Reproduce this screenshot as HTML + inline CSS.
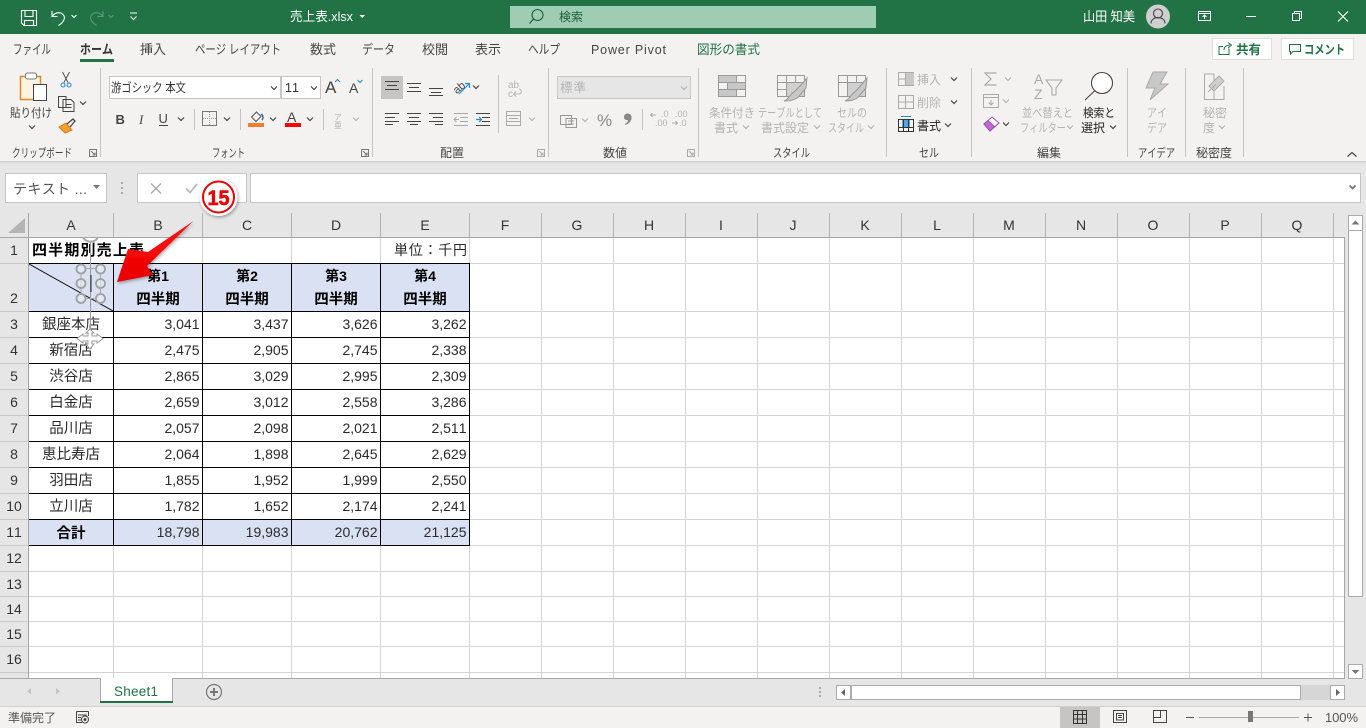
<!DOCTYPE html>
<html lang="ja"><head><meta charset="utf-8"><title>売上表.xlsx - Excel</title>
<style>
html,body{margin:0;padding:0;width:1366px;height:728px;overflow:hidden;background:#fff}
svg{display:block}
text{font-family:"Liberation Sans","Noto Sans CJK JP",sans-serif;font-size:12px;fill:#444;font-kerning:none}
.w{fill:#fff}
.tab{font-size:13px;fill:#444}
.dim{fill:#b4b4b4}
.lab{font-size:12px;fill:#444}
.c{font-size:14px;fill:#2a2a2a}
.j{font-size:14.500px;fill:#2a2a2a;text-anchor:middle}
.b{font-weight:bold;fill:#000}
.h{font-size:14px;fill:#333;text-anchor:middle}
.ln{fill:none;stroke:#444;stroke-width:1}
.dl{fill:none;stroke:#aaa;stroke-width:1}
.ch{fill:none;stroke:#444;stroke-width:1.2}
.chd{fill:none;stroke:#b4b4b4;stroke-width:1.2}
</style></head><body>
<svg width="1366" height="728" viewBox="0 0 1366 728" xmlns="http://www.w3.org/2000/svg">
<defs>
<path id="cv" d="M-3-1.5 0 1.5 3-1.5"/>
<filter id="sh" x="-30%" y="-30%" width="160%" height="160%"><feDropShadow dx="1" dy="1.5" stdDeviation="1.5" flood-color="#000" flood-opacity=".35"/></filter>
<linearGradient id="rg" x1="0" y1="0" x2="0" y2="1"><stop offset="0" stop-color="#ff1010"/><stop offset="1" stop-color="#e80000"/></linearGradient>
</defs>

<!-- base -->
<rect width="1366" height="728" fill="#e6e6e6"/>
<!-- title bar -->
<rect width="1366" height="34" fill="#217346"/>
<g fill="none" stroke="#fff" stroke-width="1.1">
<path d="M21.5 10.5H36.5V25.5H24L21.5 23Z"/><path d="M25 10.5V16.5H33V10.5M24.5 25.5V20.5H33.5V25.5"/>
<path d="M52 11V16.5H57.5M52.5 16C55 12.500 60 11.500 63 14.500C66 17.500 64 22 58.500 25.500"/>
<path d="M71.500 15 74 17.500 76.500 15" stroke-width="1"/>
</g>
<g fill="none" stroke="#5d9a79" stroke-width="1.1">
<path d="M103 11V16.500H97.500M102.500 16C100 12.500 95 11.500 92 14.500C89 17.500 91 22 96.500 25.500"/>
<path d="M108.500 15 111 17.500 113.500 15" stroke-width="1"/>
</g>
<path d="M130 13H137M130.500 16.500 133.500 19.500 136.500 16.500" fill="none" stroke="#fff" stroke-width="1"/>
<text x="290" y="21" class="w" style="font-size:13px" textLength="63" lengthAdjust="spacingAndGlyphs">売上表.xlsx</text>
<path d="M359.500 15H365L362.250 18Z" fill="#fff"/>
<rect x="510" y="6" width="366" height="22" fill="#9fcdb3"/>
<circle cx="537.500" cy="15" r="5.500" fill="none" stroke="#1d5c3b" stroke-width="1.1"/><path d="M533.500 19 529.500 23.500" stroke="#1d5c3b" stroke-width="1.2"/>
<text x="559" y="21" style="font-size:12px;fill:#1d5c3b" textLength="24">検索</text>
<text x="1083" y="21" class="w" style="font-size:13px" textLength="52" lengthAdjust="spacingAndGlyphs">山田 知美</text>
<circle cx="1158" cy="16.500" r="12" fill="#cfcfcf"/>
<circle cx="1158" cy="13.500" r="4.500" fill="none" stroke="#444" stroke-width="1.1"/><path d="M1151 23.500C1151 15.500 1165 15.500 1165 23.500" fill="none" stroke="#444" stroke-width="1.1"/>
<g fill="none" stroke="#fff" stroke-width="1">
<path d="M1198.500 11.500H1210.500V20.500H1198.500ZM1198.500 13.500H1210.500M1204.500 19V15M1202.500 17 1204.500 15 1206.500 17"/>
<path d="M1246 16.500H1256"/>
<path d="M1292.500 13.500H1299.500V20.500H1292.500ZM1294.500 13.500V11.500H1301.500V18.500H1299.500"/>
<path d="M1338 11.500 1348 21.500M1348 11.500 1338 21.500" stroke-width="1.1"/>
</g>

<!-- ribbon -->
<rect y="34" width="1366" height="127" fill="#f3f2f1"/>
<rect y="161" width="1366" height="1" fill="#d2d2d2"/><rect y="162" width="1366" height="1" fill="#dcdcdc"/><rect y="163" width="1366" height="1" fill="#e2e2e2"/>
<!-- tabs -->
<g class="tb">
<text x="13" y="54" class="tab" textLength="38" lengthAdjust="spacingAndGlyphs">ファイル</text>
<text x="80" y="54" class="tab" style="font-weight:bold;fill:#333" textLength="33" lengthAdjust="spacingAndGlyphs">ホーム</text>
<text x="140" y="54" class="tab" textLength="26">挿入</text>
<text x="195" y="54" class="tab" textLength="86" lengthAdjust="spacingAndGlyphs">ページ レイアウト</text>
<text x="310" y="54" class="tab" textLength="26">数式</text>
<text x="362" y="54" class="tab" textLength="33" lengthAdjust="spacingAndGlyphs">データ</text>
<text x="422" y="54" class="tab" textLength="26">校閲</text>
<text x="475" y="54" class="tab" textLength="26">表示</text>
<text x="528" y="54" class="tab" textLength="32" lengthAdjust="spacingAndGlyphs">ヘルプ</text>
<text x="591" y="54" class="tab" style="font-size:12.500px" textLength="75">Power Pivot</text>
<text x="697" y="54" class="tab" style="fill:#217346" textLength="63" lengthAdjust="spacingAndGlyphs">図形の書式</text>
</g>
<rect x="80" y="59" width="34" height="3" fill="#217346"/>
<!-- share/comment -->
<rect x="1212.500" y="38.500" width="59" height="21" fill="#fff" stroke="#e1dfdd"/>
<rect x="1281.500" y="38.500" width="72" height="21" fill="#fff" stroke="#e1dfdd"/>
<path d="M1229 48.500V54.500H1219V46.500H1223M1224 50C1224 46.500 1227 45 1230 45M1228 42.500 1231.500 45 1228 48" fill="none" stroke="#217346" stroke-width="1"/>
<text x="1236" y="54" style="font-size:12.500px;font-weight:bold;fill:#217346" textLength="25">共有</text>
<path d="M1289.500 44.500H1300.500V51.500H1293L1290.500 54V51.500H1289.500Z" fill="none" stroke="#217346" stroke-width="1"/>
<text x="1304" y="54" style="font-size:12.500px;font-weight:bold;fill:#217346" textLength="41" lengthAdjust="spacingAndGlyphs">コメント</text>

<!-- separators -->
<g fill="#c4c4c4">
<rect x="100" y="68" width="1" height="89"/><rect x="372" y="68" width="1" height="89"/><rect x="548" y="68" width="1" height="89"/><rect x="698" y="68" width="1" height="89"/><rect x="886" y="68" width="1" height="89"/><rect x="971" y="68" width="1" height="89"/><rect x="1127" y="68" width="1" height="89"/><rect x="1185" y="68" width="1" height="89"/><rect x="1243" y="68" width="1" height="89"/>
<rect x="498" y="75" width="1" height="58"/>
<rect x="194" y="109" width="1" height="21"/><rect x="240" y="109" width="1" height="21"/><rect x="323" y="109" width="1" height="21"/><rect x="642" y="109" width="1" height="21"/>
</g>
<!-- group labels -->
<text x="12" y="157" class="lab" textLength="60" lengthAdjust="spacingAndGlyphs">クリップボード</text>
<text x="212" y="157" class="lab" textLength="33" lengthAdjust="spacingAndGlyphs">フォント</text>
<text x="440" y="157" class="lab" textLength="24">配置</text>
<text x="603" y="157" class="lab" textLength="24">数値</text>
<text x="773" y="157" class="lab" textLength="37" lengthAdjust="spacingAndGlyphs">スタイル</text>
<text x="919" y="157" class="lab" textLength="20" lengthAdjust="spacingAndGlyphs">セル</text>
<text x="1037" y="157" class="lab" textLength="24">編集</text>
<text x="1138" y="157" class="lab" textLength="37" lengthAdjust="spacingAndGlyphs">アイデア</text>
<text x="1196" y="157" class="lab" textLength="36">秘密度</text>
<!-- launchers -->
<g fill="none" stroke="#777" stroke-width="1">
<path d="M89.500 149.500V156.500H96.500V149.500H89.500M91 151 95 155M95 152.500V155H92.500"/>
<path d="M361.500 149.500V156.500H368.500V149.500H361.500M363 151 367 155M367 152.500V155H364.500"/>
<path d="M537.500 149.500V156.500H544.500V149.500H537.500M539 151 543 155M543 152.500V155H540.500" stroke="#aaa"/>
<path d="M687.500 149.500V156.500H694.500V149.500H687.500M689 151 693 155M693 152.500V155H690.500" stroke="#aaa"/>
</g>
<path d="M1347.500 156.500 1352 152.500 1356.500 156.500" fill="none" stroke="#444" stroke-width="1.200"/>

<!-- clipboard -->
<rect x="20.500" y="76.500" width="20" height="23" fill="#fdf3e3" stroke="#e08a1e" stroke-width="1.500"/>
<rect x="25.500" y="73" width="11" height="6" rx="2" fill="#fff" stroke="#777"/>
<rect x="33.500" y="84.500" width="13" height="16" fill="#fff" stroke="#444"/>
<text x="10" y="117" class="lab" textLength="42" lengthAdjust="spacingAndGlyphs">貼り付け</text>
<use href="#cv" x="32" y="127" class="ch"/>
<g fill="none" stroke="#555" stroke-width="1"><path d="M62.500 72 68 82.500M69.500 72 64 82.500"/></g>
<circle cx="63" cy="85" r="2" fill="none" stroke="#2a7fc9"/><circle cx="69" cy="85" r="2" fill="none" stroke="#2a7fc9"/>
<path d="M58.500 96.500H66V107.500H58.500ZM63 99.500H71L74 102.500V111.500H63ZM65.500 104.500H71.500M65.500 107.500H71.500" fill="#f3f2f1" stroke="#444"/>
<use href="#cv" x="83" y="103" class="ch"/>
<path d="M59 127 66 123 72 130 65 133Z" fill="#f0a030" stroke="#d97c16"/><path d="M67 124 73 119 75 121 70 127" fill="none" stroke="#444" stroke-width="1.300"/>

<!-- font -->
<rect x="109.500" y="76.500" width="171" height="22" fill="#fff" stroke="#c6c6c6"/>
<rect x="281.500" y="76.500" width="39" height="22" fill="#fff" stroke="#c6c6c6"/>
<text x="111" y="92" style="font-size:12.500px;fill:#333" textLength="75" lengthAdjust="spacingAndGlyphs">游ゴシック 本文</text>
<use href="#cv" x="274" y="88" class="ch"/><use href="#cv" x="314" y="88" class="ch"/>
<text x="285" y="92" style="font-size:12.500px;fill:#333">11</text>
<text x="325" y="93" style="font-size:17px;fill:#444">A</text><path d="M335 82 337.500 79.500 340 82" fill="none" stroke="#2a7fc9"/>
<text x="349" y="93" style="font-size:14px;fill:#444">A</text><path d="M357.500 80 360 82.500 362.500 80" fill="none" stroke="#2a7fc9"/>
<text x="115.500" y="124" style="font-size:13px;font-weight:bold;fill:#444">B</text>
<text x="139" y="124" style="font-size:13px;font-style:italic;font-family:'Liberation Serif',serif;fill:#444">I</text>
<text x="158.500" y="123" style="font-size:13px;fill:#444">U</text><rect x="159" y="125" width="9" height="1" fill="#444"/>
<use href="#cv" x="181" y="119" class="ch"/>
<rect x="202.500" y="111.500" width="14" height="14" fill="none" stroke="#777"/><path d="M209.500 112V125M203 118.500H216" stroke="#999" stroke-dasharray="1 1"/>
<use href="#cv" x="227" y="119" class="ch"/>
<path d="M251.500 117 256.500 112 261 116.500 256 121.500Z" fill="none" stroke="#555"/><path d="M261 114C264 116 263 119 262 120" fill="none" stroke="#2a5fa0" stroke-width="1.400"/>
<rect x="248" y="123" width="16" height="4" fill="#ed7d31"/>
<use href="#cv" x="273" y="119" class="ch"/>
<text x="287" y="122" style="font-size:14px;fill:#444">A</text>
<rect x="285" y="123" width="16" height="4" fill="#f00"/>
<use href="#cv" x="310" y="119" class="ch"/>
<text x="334" y="120" style="font-size:8px;fill:#b4b4b4">ア</text><text x="334" y="128" style="font-size:8px;fill:#b4b4b4">亜</text>
<use href="#cv" x="356" y="119" class="chd"/>

<!-- alignment -->
<rect x="381" y="76" width="22" height="23" fill="#c6c5c3"/>
<g fill="none" stroke="#444" stroke-width="1">
<path d="M385 81.500H399M387 85.500H397M385 89.500H399"/>
<path d="M407 83.500H421M409 87.500H419M407 91.500H421"/>
<path d="M429 88.500H443M431 92.500H441M429 95.500H443"/>
<path d="M385 113.500H399M385 117.500H395M385 121.500H399M385 124.500H393"/>
<path d="M407 113.500H421M409 117.500H419M407 121.500H421M410 124.500H418"/>
<path d="M429 113.500H443M433 117.500H443M429 121.500H443M435 124.500H443"/>
<path d="M476 113.500H490M482 117.500H490M482 121.500H490M476 125.500H490"/>
</g>
<g fill="none" stroke="#aaa"><path d="M454 113.500H468M460 117.500H468M460 121.500H468M454 125.500H468M459 119.500H454M456.500 117 454 119.500 456.500 122"/></g>
<path d="M476 119.500H481M479 117 481.500 119.500 479 122" fill="none" stroke="#2a8ad8" stroke-width="1.200"/>
<text x="453" y="92" style="font-size:11px;fill:#444" transform="rotate(-40 458 88)">ab</text>
<path d="M459 94 469 84M465 83.500H469.500V88" fill="none" stroke="#2a8ad8" stroke-width="1.200"/>
<use href="#cv" x="476" y="87" class="ch"/>
<text x="508" y="88" class="dim" style="font-size:10px">ab</text><text x="508" y="97" class="dim" style="font-size:10px">c</text>
<path d="M514 94H519C522 94 522 89 519 89M516 91.500 513.500 94 516 96.500" fill="none" stroke="#b4b4b4"/>
<g class="dl"><rect x="506.500" y="111.500" width="14" height="14" fill="none" stroke="#aaa"/><path d="M507 115.500H520M507 121.500H520M509 118.500H518" fill="none" stroke="#aaa"/></g>
<use href="#cv" x="532" y="119" class="chd"/>

<!-- number -->
<rect x="557.500" y="76.500" width="133" height="22" fill="#e6e6e6" stroke="#c6c6c6"/>
<text x="560" y="92" class="dim" style="font-size:12.500px" textLength="26">標準</text>
<use href="#cv" x="684" y="88" class="chd"/>
<g fill="none" stroke="#999"><path d="M560.500 115.500H571.500V124.500H560.500ZM566 118.500H576.500V127.500H566ZM568 121H574M568 124H574"/></g>
<use href="#cv" x="585" y="120" class="chd"/>
<text x="597" y="126" style="font-size:17px;fill:#888">%</text>
<path d="M627.500 113.500C630.500 113.500 632 115.500 631.500 118.500C631 121.500 628.500 124 625.500 125L625 124C627 123 628 121.500 628 120C625.500 120.500 624 119 624 117C624 115 625.500 113.500 627.500 113.500Z" fill="#888"/>
<text x="661" y="117" class="dim" style="font-size:9px">.0</text><text x="655" y="126" class="dim" style="font-size:9px">.00</text>
<path d="M656 115H650.500M652.500 113 650.500 115 652.500 117" fill="none" stroke="#aaa"/>
<text x="675" y="117" class="dim" style="font-size:9px">.00</text><text x="679" y="126" class="dim" style="font-size:9px">.0</text>
<path d="M672 123H677.500M675.500 121 677.500 123 675.500 125" fill="none" stroke="#aaa"/>

<!-- styles -->
<g fill="none" stroke="#999">
<rect x="718.500" y="75.500" width="27" height="21" fill="#f3f2f1"/><path d="M718.500 82.500H745.500M718.500 89.500H745.500M727.500 75.500V96.500M736.500 75.500V96.500"/>
<rect x="777.500" y="75.500" width="27" height="21"/><path d="M777.500 82.500H804.500M777.500 89.500H804.500M786.500 75.500V96.500M795.500 75.500V96.500"/>
<rect x="838.500" y="75.500" width="27" height="21"/><path d="M838.500 82.500H865.500M847.500 75.500V82.500M856.500 75.500V82.500M847.500 82.500V96.500"/>
</g>
<rect x="719" y="76" width="17" height="6" fill="#c8c8c8"/><rect x="728" y="83" width="17" height="6" fill="#c8c8c8"/><rect x="719" y="90" width="17" height="6" fill="#c8c8c8"/>
<rect x="787" y="83" width="17" height="13" fill="#d0d0d0"/><rect x="848" y="83" width="17" height="13" fill="#d0d0d0"/>
<path d="M802 84 807 78 806 88 800 95C797 100 790 101 784 101 789 99 790 94 794 92Z" fill="#c8c8c8" stroke="#999"/>
<path d="M862 84 867 78 866 88 860 95C857 100 850 101 845 101 850 99 851 94 855 92Z" fill="#c8c8c8" stroke="#999"/>
<text x="709" y="117" class="dim" textLength="46" lengthAdjust="spacingAndGlyphs">条件付き</text>
<text x="714" y="132" class="dim" textLength="24">書式</text><use href="#cv" x="746" y="127" class="chd"/>
<text x="758" y="117" class="dim" textLength="64" lengthAdjust="spacingAndGlyphs">テーブルとして</text>
<text x="761" y="132" class="dim" textLength="48">書式設定</text><use href="#cv" x="817" y="127" class="chd"/>
<text x="837" y="117" class="dim" textLength="30" lengthAdjust="spacingAndGlyphs">セルの</text>
<text x="828" y="132" class="dim" textLength="36" lengthAdjust="spacingAndGlyphs">スタイル</text><use href="#cv" x="871" y="127" class="chd"/>

<!-- cells -->
<g fill="none" stroke="#aaa">
<rect x="898.500" y="72.500" width="15" height="13"/><path d="M905.500 72.500V85.500M898.500 79H913.500"/>
<rect x="898.500" y="95.500" width="15" height="13"/><path d="M905.500 95.500V108.500M898.500 102H913.500"/>
</g>
<rect x="906" y="73" width="8" height="12" fill="#c8c8c8"/>
<text x="917" y="84" class="dim" textLength="24">挿入</text><use href="#cv" x="954" y="79" class="ch"/>
<text x="917" y="107" class="dim" textLength="24">削除</text><use href="#cv" x="954" y="102" class="ch"/>
<rect x="898.500" y="119.500" width="15" height="12" fill="none" stroke="#333"/><rect x="902" y="120" width="8" height="7" fill="#5ba4dc"/>
<path d="M903.500 119.500V131.500M908.500 119.500V131.500M898.500 127.500H913.500" fill="none" stroke="#333"/><path d="M901 116.500H911" stroke="#2a8ad8"/>
<text x="917" y="130" style="font-size:12px;fill:#222" textLength="24">書式</text><use href="#cv" x="948" y="125" class="ch"/>

<!-- editing -->
<path d="M996.500 73H985L991 79 985 85H996.500" fill="none" stroke="#aaa" stroke-width="1.200"/><use href="#cv" x="1008" y="79" class="chd"/>
<rect x="983.500" y="94.500" width="15" height="13" fill="none" stroke="#aaa"/><path d="M983.500 97.500H998.500M991 100V105M988.500 102.500 991 105 993.500 102.500" fill="none" stroke="#aaa"/>
<use href="#cv" x="1006" y="101" class="chd"/>
<path d="M984 124 992 117 999 123 990 131Z" fill="#fff" stroke="#a04bb8"/><path d="M984 124 988 120.500 994.500 126.500 990 131Z" fill="#c266d6" stroke="#a04bb8"/>
<use href="#cv" x="1006" y="124" class="ch"/>
<text x="1034" y="84" style="font-size:14px;fill:#aaa">A</text><text x="1034" y="99" style="font-size:14px;fill:#aaa">Z</text>
<path d="M1046 80H1062L1056 88V95H1052V88Z" fill="none" stroke="#aaa" stroke-width="1.100"/>
<text x="1022" y="117" class="dim" textLength="51" lengthAdjust="spacingAndGlyphs">並べ替えと</text>
<text x="1020" y="132" class="dim" textLength="46" lengthAdjust="spacingAndGlyphs">フィルター</text><use href="#cv" x="1070" y="127" class="chd"/>
<circle cx="1102" cy="83" r="10.500" fill="#fff" stroke="#444" stroke-width="1.100"/><path d="M1094.500 91 1085 100" stroke="#444" stroke-width="1.100"/>
<text x="1083" y="117" style="font-size:12px;fill:#222" textLength="32" lengthAdjust="spacingAndGlyphs">検索と</text>
<text x="1081" y="132" style="font-size:12px;fill:#222" textLength="24">選択</text><use href="#cv" x="1113" y="127" class="ch"/>

<!-- ideas -->
<path d="M1153 72H1167L1160 84H1168L1150 100 1155 88H1146Z" fill="#c8c8c8" stroke="#aaa"/>
<text x="1147" y="117" class="dim" textLength="20" lengthAdjust="spacingAndGlyphs">アイ</text>
<text x="1147" y="132" class="dim" textLength="20" lengthAdjust="spacingAndGlyphs">デア</text>
<!-- sensitivity -->
<path d="M1204.500 74H1214V99.500H1204.500ZM1214 99.500H1224V86" fill="none" stroke="#aaa"/>
<path d="M1209 86 1219 76 1224 81 1214 91Z" fill="#d0d0d0" stroke="#aaa"/><path d="M1208 92 1216 84" stroke="#aaa"/>
<text x="1203" y="117" class="dim" textLength="24">秘密</text>
<text x="1203" y="132" class="dim">度</text><use href="#cv" x="1222" y="127" class="chd"/>

<!-- formula bar -->
<rect x="5.500" y="173.500" width="101" height="29" fill="#fff" stroke="#c6c6c6"/>
<text x="13" y="194" style="font-size:14px;fill:#555" textLength="74" lengthAdjust="spacing">テキスト ...</text>
<path d="M93 185H100L96.500 189Z" fill="#777"/>
<g fill="#aaa"><rect x="121" y="182" width="2" height="2"/><rect x="121" y="187" width="2" height="2"/><rect x="121" y="192" width="2" height="2"/></g>
<rect x="137.500" y="173.500" width="109" height="29" fill="#fff" stroke="#c6c6c6"/>
<rect x="250.500" y="173.500" width="1110" height="29" fill="#fff" stroke="#c6c6c6"/>
<path d="M151 183.500 161 193.500M161 183.500 151 193.500" stroke="#aaa" stroke-width="1.400"/>
<path d="M186 188.500 190 192.500 197 184" fill="none" stroke="#bbb" stroke-width="1.800"/>
<path d="M1349.500 185.500 1352.500 188.500 1355.500 185.500" fill="none" stroke="#777" stroke-width="1.800"/>

<!-- sheet -->
<rect x="28" y="237" width="1316" height="441" fill="#fff"/>
<rect x="29" y="264" width="84" height="47" fill="#d9e1f2"/><rect x="113" y="264" width="356" height="47" fill="#d9e1f2"/>
<rect x="29" y="520" width="440" height="25" fill="#d9e1f2"/>
<!-- gridlines -->
<path stroke="#d4d4d4" fill="none" d="M28 263.500H1344M28 311.500H1344M28 337.500H1344M28 363.500H1344M28 389.500H1344M28 415.500H1344M28 441.500H1344M28 467.500H1344M28 493.500H1344M28 519.500H1344M28 545.500H1344M28 571.500H1344M28 596.500H1344M28 621.500H1344M28 646.500H1344M28 672.500H1344
M113.500 545V678M202.500 237V678M291.500 237V678M380.500 237V678M469.500 237V678M541.500 237V678M613.500 237V678M685.500 237V678M757.500 237V678M829.500 237V678M901.500 237V678M973.500 237V678M1045.500 237V678M1117.500 237V678M1189.500 237V678M1261.500 237V678M1333.500 237V678"/>
<!-- table borders -->
<path stroke="#000" fill="none" d="M28 263.500H470M28 311.500H470M28 337.500H470M28 363.500H470M28 389.500H470M28 415.500H470M28 441.500H470M28 467.500H470M28 493.500H470M28 519.500H470M28 545.500H470
M113.500 263V546M202.500 263V546M291.500 263V546M380.500 263V546M469.500 263V546"/>
<path d="M29 264 113 311" stroke="#000"/>
<!-- headers -->
<rect x="0" y="213" width="1344" height="24" fill="#e6e6e6"/>
<rect x="0" y="237" width="28" height="441" fill="#e6e6e6"/>
<path stroke="#c8c8c8" fill="none" d="M0 263.500H28M0 311.500H28M0 337.500H28M0 363.500H28M0 389.500H28M0 415.500H28M0 441.500H28M0 467.500H28M0 493.500H28M0 519.500H28M0 545.500H28M0 571.500H28M0 596.500H28M0 621.500H28M0 646.500H28M0 672.500H28"/>
<path stroke="#b4b4b4" fill="none" d="M113.500 213V237M202.500 213V237M291.500 213V237M380.500 213V237M469.500 213V237M541.500 213V237M613.500 213V237M685.500 213V237M757.500 213V237M829.500 213V237M901.500 213V237M973.500 213V237M1045.500 213V237M1117.500 213V237M1189.500 213V237M1261.500 213V237M1333.500 213V237"/>
<path d="M28.500 213V678M0 237.500H1344M1344.500 237V678M0 678.500H1345" stroke="#a6a6a6" fill="none"/>
<path d="M8 233 25 218V233Z" fill="#b4b4b4"/>
<g>
<text x="71" y="230" class="h">A</text><text x="158" y="230" class="h">B</text><text x="247" y="230" class="h">C</text><text x="336" y="230" class="h">D</text><text x="425" y="230" class="h">E</text><text x="505" y="230" class="h">F</text><text x="577" y="230" class="h">G</text><text x="649" y="230" class="h">H</text><text x="721" y="230" class="h">I</text><text x="793" y="230" class="h">J</text><text x="865" y="230" class="h">K</text><text x="937" y="230" class="h">L</text><text x="1009" y="230" class="h">M</text><text x="1081" y="230" class="h">N</text><text x="1153" y="230" class="h">O</text><text x="1225" y="230" class="h">P</text><text x="1297" y="230" class="h">Q</text>
<text x="14" y="255" class="h">1</text><text x="14" y="303" class="h">2</text><text x="14" y="329" class="h">3</text><text x="14" y="355" class="h">4</text><text x="14" y="381" class="h">5</text><text x="14" y="407" class="h">6</text><text x="14" y="433" class="h">7</text><text x="14" y="459" class="h">8</text><text x="14" y="485" class="h">9</text><text x="14" y="511" class="h">10</text><text x="14" y="537" class="h">11</text><text x="14" y="563" class="h">12</text><text x="14" y="589" class="h">13</text><text x="14" y="614" class="h">14</text><text x="14" y="639" class="h">15</text><text x="14" y="664" class="h">16</text>
</g>
<!-- cell text -->
<text x="32" y="255" style="font-size:15px;font-weight:bold;fill:#000" textLength="112">四半期別売上表</text>
<text x="394" y="255" class="c" textLength="73">単位：千円</text>
<g text-anchor="middle">
<text x="158" y="281" class="j b" style="font-size:14px">第1</text><text x="247" y="281" class="j b" style="font-size:14px">第2</text><text x="336" y="281" class="j b" style="font-size:14px">第3</text><text x="425" y="281" class="j b" style="font-size:14px">第4</text>
<text x="158" y="304" class="j b">四半期</text><text x="247" y="304" class="j b">四半期</text><text x="336" y="304" class="j b">四半期</text><text x="425" y="304" class="j b">四半期</text>
<text x="71" y="329" class="j">銀座本店</text><text x="71" y="355" class="j">新宿店</text><text x="71" y="381" class="j">渋谷店</text><text x="71" y="407" class="j">白金店</text><text x="71" y="433" class="j">品川店</text><text x="71" y="459" class="j">恵比寿店</text><text x="71" y="485" class="j">羽田店</text><text x="71" y="511" class="j">立川店</text><text x="71" y="538" class="j b">合計</text>
</g>
<g text-anchor="end">
<text x="199.500" y="329" class="c">3,041</text><text x="288.500" y="329" class="c">3,437</text><text x="377.500" y="329" class="c">3,626</text><text x="466.500" y="329" class="c">3,262</text>
<text x="199.500" y="355" class="c">2,475</text><text x="288.500" y="355" class="c">2,905</text><text x="377.500" y="355" class="c">2,745</text><text x="466.500" y="355" class="c">2,338</text>
<text x="199.500" y="381" class="c">2,865</text><text x="288.500" y="381" class="c">3,029</text><text x="377.500" y="381" class="c">2,995</text><text x="466.500" y="381" class="c">2,309</text>
<text x="199.500" y="407" class="c">2,659</text><text x="288.500" y="407" class="c">3,012</text><text x="377.500" y="407" class="c">2,558</text><text x="466.500" y="407" class="c">3,286</text>
<text x="199.500" y="433" class="c">2,057</text><text x="288.500" y="433" class="c">2,098</text><text x="377.500" y="433" class="c">2,021</text><text x="466.500" y="433" class="c">2,511</text>
<text x="199.500" y="459" class="c">2,064</text><text x="288.500" y="459" class="c">1,898</text><text x="377.500" y="459" class="c">2,645</text><text x="466.500" y="459" class="c">2,629</text>
<text x="199.500" y="485" class="c">1,855</text><text x="288.500" y="485" class="c">1,952</text><text x="377.500" y="485" class="c">1,999</text><text x="466.500" y="485" class="c">2,550</text>
<text x="199.500" y="511" class="c">1,782</text><text x="288.500" y="511" class="c">1,652</text><text x="377.500" y="511" class="c">2,174</text><text x="466.500" y="511" class="c">2,241</text>
<text x="199.500" y="537" class="c">18,798</text><text x="288.500" y="537" class="c">19,983</text><text x="377.500" y="537" class="c">20,762</text><text x="466.500" y="537" class="c">21,125</text>
</g>

<!-- textbox selection -->
<path d="M90.500 241V330" stroke="#9a9a9a" fill="none"/>
<path d="M83.500 237.500C85 243 96 243 97.500 237.500" fill="none" stroke="#aaa" stroke-width="2"/>
<path d="M85 268.500H97M85 298.500H97M81 273V294M100.500 273V294" stroke="#a8a8a8" fill="none"/>
<g fill="#eef1f8" stroke="#a0a0a0" stroke-width="1.800" fill-opacity=".5">
<circle cx="81" cy="269" r="4.500"/><circle cx="100.500" cy="269" r="4.500"/><circle cx="81" cy="283.500" r="4.500"/><circle cx="100.500" cy="283.500" r="4.500"/><circle cx="81" cy="298.500" r="4.500"/><circle cx="100.500" cy="298.500" r="4.500"/>
</g>
<path d="M91 275V292" stroke="#222"/>
<path d="M90 329 94 333H92V336H97V334L103 338.500 97 343V341H92V344H94L90 349 86 344H88V341H83V343L77 338.500 83 334V336H88V333H86Z" fill="#fff" stroke="#9a9a9a"/>

<!-- arrow -->
<path d="M193.500 221 148 252 128 249 117 282 153 275 147 266Z" fill="url(#rg)" filter="url(#sh)"/>
<!-- badge -->
<circle cx="218.500" cy="197" r="19" fill="#fff" filter="url(#sh)"/>
<circle cx="218.500" cy="197" r="15.500" fill="#fff" stroke="#ee0000" stroke-width="2"/>
<text x="218.500" y="205" text-anchor="middle" style="font-size:21px;font-weight:bold;fill:#ee0000;stroke:#ee0000;stroke-width:.6" textLength="22" lengthAdjust="spacingAndGlyphs">15</text>

<!-- vscroll -->
<rect x="1345" y="213" width="21" height="493" fill="#e6e6e6"/>
<rect x="1348.500" y="215.500" width="14" height="15" fill="#fff" stroke="#ababab"/>
<path d="M1351.500 224.500H1359.500L1355.500 220.500Z" fill="#777"/>
<rect x="1348.500" y="230.500" width="14" height="366" fill="#fff" stroke="#ababab"/>
<rect x="1348.500" y="664.500" width="14" height="14" fill="#fff" stroke="#ababab"/>
<path d="M1351.500 670H1359.500L1355.500 674Z" fill="#777"/>

<!-- tab bar -->
<rect y="679" width="1366" height="27" fill="#e6e6e6"/>
<path d="M0 678.500H1345" stroke="#a6a6a6"/>
<path d="M31 688V694.500L27 691.250Z" fill="#c4c4c4"/><path d="M56 688V694.500L60 691.250Z" fill="#c4c4c4"/>
<rect x="100.500" y="678" width="72" height="24" fill="#fff"/>
<path d="M100.500 678V703M172.500 678V703" stroke="#ababab"/>
<rect x="100" y="701" width="73" height="2" fill="#217346"/>
<text x="114" y="696" style="font-size:13.500px;fill:#217346" textLength="44">Sheet1</text>
<circle cx="214" cy="692" r="7.500" fill="none" stroke="#777" stroke-width="1.200"/><path d="M214 688V696M210 692H218" stroke="#777" stroke-width="2"/>
<g fill="#aaa"><rect x="819" y="687" width="2" height="2"/><rect x="819" y="691" width="2" height="2"/><rect x="819" y="695" width="2" height="2"/></g>
<rect x="836.500" y="685.500" width="14" height="14" fill="#fff" stroke="#ababab"/><path d="M845 689V696L841 692.500Z" fill="#666"/>
<rect x="851.500" y="685.500" width="449" height="14" fill="#fff" stroke="#ababab"/>
<rect x="1301" y="685" width="29" height="15" fill="#d6d6d6"/>
<rect x="1330.500" y="685.500" width="14" height="14" fill="#fff" stroke="#ababab"/><path d="M1336 689V696L1340 692.500Z" fill="#666"/>

<!-- status bar -->
<rect y="706" width="1366" height="22" fill="#f3f2f1"/><rect y="706" width="1366" height="1" fill="#d0d0d0"/>
<text x="8" y="722" style="font-size:12px;fill:#555" textLength="48">準備完了</text>
<path d="M76.500 711.500H88.500M76.500 711.500V722.500H82M78 715H87M78 717.500H81M78 720H81M88.500 711.500V716" fill="none" stroke="#444"/>
<circle cx="85" cy="719.500" r="3.500" fill="none" stroke="#444"/><circle cx="85" cy="719.500" r="1.500" fill="#444"/>
<rect x="1060" y="707" width="40" height="21" fill="#c6c5c3"/>
<path d="M1073.500 710.500H1086.500V723.500H1073.500ZM1073.500 714.500H1086.500M1073.500 719H1086.500M1077.500 710.500V723.500M1082.500 710.500V723.500" fill="none" stroke="#333"/>
<path d="M1113.500 710.500H1126.500V722.500H1113.500ZM1116.500 713.500H1123.500V720H1116.500ZM1118 715.500H1122M1118 717.500H1122" fill="none" stroke="#444"/>
<path d="M1153.500 710.500H1166.500V722.500H1153.500ZM1153.500 717.500H1160.500V710.500" fill="none" stroke="#444"/>
<path d="M1186 717.500H1194M1304 717.500H1312M1308 713.500V721.500" stroke="#555" fill="none"/>
<rect x="1199" y="717" width="100" height="1" fill="#a8a8a8"/>
<rect x="1248" y="711" width="5" height="11" fill="#777"/>
<text x="1325" y="722" style="font-size:13px;fill:#555" textLength="33">100%</text>
</svg>
</body></html>
